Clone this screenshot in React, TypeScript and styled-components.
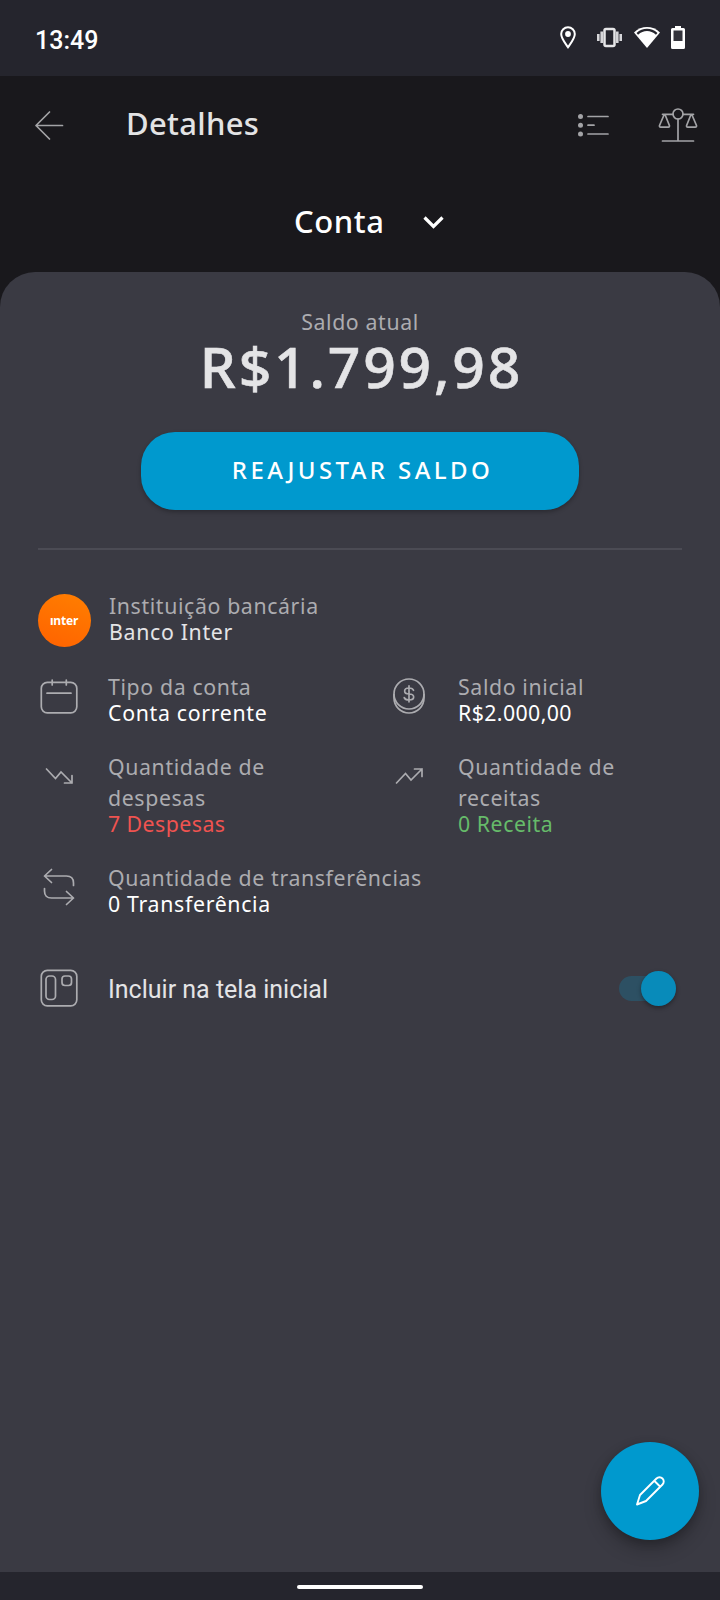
import React from "react";
import styled, { createGlobalStyle } from "styled-components";

const GlobalStyle = createGlobalStyle`
  *, *::before, *::after { box-sizing: border-box; }
  body { margin: 0; background: #19181c; font-family: "Noto Sans", sans-serif; }
  button { font: inherit; border: 0; padding: 0; background: none; color: inherit; cursor: pointer; }
  svg { display: block; flex: none; }
`;

const Screen = styled.div`
  position: relative;
  display: flex;
  flex-direction: column;
  width: 720px;
  height: 1600px;
  overflow: hidden;
  background: #19181c;
`;

const StatusBar = styled.header`
  display: flex;
  align-items: center;
  justify-content: space-between;
  flex: none;
  height: 76px;
  padding: 2px 32px 0 35px;
  background: #25252d;
`;

const Clock = styled.span`
  padding-top: 3px;
  font: 500 25px/30px Roboto, sans-serif;
  color: #fff;
`;

const StatusIcons = styled.div`
  display: flex;
  height: 26px;
  margin-top: -5px;
`;

const Toolbar = styled.div`
  display: flex;
  align-items: center;
  flex: none;
  height: 98px;
  padding: 0 21px 0 32px;
  color: #a3a3a6;
`;

const IconButton = styled.button<{ $gap?: number }>`
  display: flex;
  margin-left: ${({ $gap = 0 }) => $gap}px;
`;

const Title = styled.h1`
  flex: 1;
  margin: -4px 0 0 58px;
  font-size: 31px;
  font-weight: 500;
  line-height: 44px;
  letter-spacing: 0.3px;
  color: #e3e3e4;
`;

const AccountPicker = styled.button`
  display: flex;
  align-items: center;
  align-self: flex-start;
  flex: none;
  gap: 36px;
  height: 98px;
  margin-left: 294px;
  padding-bottom: 4px;
  font-size: 31px;
  font-weight: 500;
  letter-spacing: 0.6px;
  color: #fff;
`;

const Panel = styled.main`
  display: flex;
  flex-direction: column;
  flex: 1;
  padding: 34px 38px 0;
  border-radius: 35px 35px 0 0;
  background: #3a3a43;
`;

const Summary = styled.section`
  display: flex;
  flex-direction: column;
  align-items: center;
  height: 244px;
  border-bottom: 2px solid #4b4b54;
`;

const Label = styled.span`
  font-size: 21.3px;
  line-height: 31px;
  letter-spacing: 0.62px;
  color: #acacb0;
`;

const Value = styled.span<{ $color?: string; $spacing?: number }>`
  font-size: 21.3px;
  line-height: 21px;
  letter-spacing: ${({ $spacing = 0.68 }) => $spacing}px;
  color: ${({ $color = "#fff" }) => $color};
`;

const Balance = styled.strong`
  height: 95px;
  padding-left: 3px;
  font-size: 57px;
  font-weight: 500;
  line-height: 58px;
  letter-spacing: 2.8px;
  -webkit-text-stroke: 0.6px #e4e4e6;
  color: #e4e4e6;
`;

const AdjustButton = styled.button`
  width: 438px;
  height: 78px;
  padding: 0 0 3px 5px;
  border-radius: 34px;
  background: #0099ce;
  box-shadow: 0 2px 4px rgba(0, 0, 0, 0.28);
  font-size: 24px;
  font-weight: 500;
  letter-spacing: 3.4px;
  color: #fff;
`;

const Details = styled.section`
  display: grid;
  grid-template-columns: 350px 294px;
  row-gap: 28px;
  padding-top: 40px;
`;

const Item = styled.div<{ $wide?: boolean }>`
  display: flex;
  grid-column: ${({ $wide }) => ($wide ? "1 / -1" : "auto")};
`;

const ItemIcon = styled.div<{ $top?: number; $width?: number }>`
  flex: none;
  width: ${({ $width = 70 }) => $width}px;
  max-height: 53px;
  padding-top: ${({ $top = 4 }) => $top}px;
  color: #acacb0;
`;

const ItemText = styled.div<{ $narrow?: boolean }>`
  display: flex;
  flex-direction: column;
  width: ${({ $narrow }) => ($narrow ? "190px" : "auto")};
`;

const HomeRow = styled.label`
  display: flex;
  align-items: center;
  height: 60px;
  margin-top: 44px;
  padding-right: 6px;
`;

const HomeLabel = styled.span`
  flex: 1;
  padding-top: 3px;
  font: 400 25px/32px Roboto, sans-serif;
  color: #e4e4e6;
`;

const Switch = styled.span`
  display: flex;
  align-items: center;
  justify-content: flex-end;
  width: 57px;
  height: 25px;
  border-radius: 13px;
  background: #2d5063;
`;

const Thumb = styled.span`
  width: 35px;
  height: 35px;
  border-radius: 50%;
  background: #088bba;
  box-shadow: 0 2px 4px rgba(0, 0, 0, 0.35);
`;

const NavBar = styled.footer`
  display: flex;
  justify-content: center;
  flex: none;
  height: 28px;
  padding-top: 13px;
  background: #25252d;
`;

const Handle = styled.span`
  width: 126px;
  height: 4px;
  border-radius: 2px;
  background: #fff;
`;

const EditButton = styled.button`
  position: absolute;
  right: 21px;
  bottom: 60px;
  display: flex;
  align-items: center;
  justify-content: center;
  width: 98px;
  height: 98px;
  border-radius: 50%;
  background: #0099ce;
  box-shadow: 0 10px 18px rgba(0, 0, 0, 0.22), 0 3px 8px rgba(0, 0, 0, 0.2);
  color: #fff;
`;

type DrawingProps = { w: number; h: number; stroke?: number; children: React.ReactNode };

const Drawing = ({ w, h, stroke = 1.7, children }: DrawingProps) => (
  <svg width={w} height={h} viewBox={`0 0 ${w} ${h}`} fill="none" stroke="currentColor"
    strokeWidth={stroke} strokeLinecap="round" strokeLinejoin="round">
    {children}
  </svg>
);

const StatusGlyphs = () => (
  <svg width="128" height="26" viewBox="560 24 128 26" fill="none" stroke="#fff">
    <path d="M568 47.200C565.800 43.800 561.200 38.700 561.200 34a6.800 6.800 0 0 1 13.600 0c0 4.700-4.600 9.800-6.800 13.200z" strokeWidth="2" />
    <circle cx="568" cy="34" r="2.900" fill="#fff" stroke="none" />
    <rect x="604.500" y="29" width="10" height="17" rx="1.500" stroke="#e6e6e8" strokeWidth="2.500" />
    <path d="M601.700 31.500v11.500M617.300 31.500v11.500M598.300 34v7M620.700 34v7" stroke="#d6d6d9" strokeWidth="2.600" />
    <path d="M634 32.500C641.500 25.200 652.500 25.200 660 32.500L647 48z" fill="#fff" stroke="none" />
    <path d="M637.300 33.800C643.200 28.600 650.800 28.600 656.700 33.800" stroke="#25252d" strokeWidth="2.400" />
    <path d="M671 29.500q0-1.500 1.500-1.500h2.500v-2h6v2h2.500q1.500 0 1.500 1.500v18q0 1.500-1.500 1.500h-11q-1.500 0-1.500-1.500z" fill="#fff" stroke="none" />
    <rect x="673.500" y="30.500" width="9" height="10.500" fill="#34343c" stroke="none" />
  </svg>
);

const BackIcon = () => (
  <Drawing w={36} h={36}>
    <path d="M17.500 5L4 18.500 17.500 32M4 18.500h26.500" />
  </Drawing>
);

const ListIcon = () => (
  <Drawing w={34} h={30}>
    <g fill="currentColor" stroke="none">
      <circle cx="4.500" cy="6.500" r="2.500" />
      <circle cx="4.500" cy="15.200" r="2.500" />
      <circle cx="4.500" cy="24" r="2.500" />
    </g>
    <path d="M12 6.500h20M12 15.200h6M12 24h20" />
  </Drawing>
);

const ScaleIcon = () => (
  <Drawing w={42} h={38}>
    <circle cx="21" cy="8" r="5" />
    <path d="M16 8.300H5.500M26 8.300H36.500M21 13v22M5.500 35h31" />
    <path d="M7 9L2.500 19.500q-.3 1.700 1.200 1.700h7.600q1.400 0 1.100-1.700L8.200 9M33.800 9l-4.200 10.500q-.3 1.700 1.100 1.700h7.600q1.400 0 1.200-1.700L35 9" />
  </Drawing>
);

const ChevronIcon = () => (
  <Drawing w={24} h={20} stroke={3.2}>
    <path d="M3.500 6.500l9 9 9-9" strokeLinecap="butt" strokeLinejoin="miter" />
  </Drawing>
);

const CalendarIcon = () => (
  <Drawing w={42} h={40}>
    <rect x="3.300" y="7.300" width="35.500" height="30.500" rx="6" />
    <path d="M14.200 5v5M28.300 5v5M9 18.200h24" />
  </Drawing>
);

const CoinIcon = () => (
  <Drawing w={42} h={42}>
    <circle cx="21" cy="19" r="15" />
    <path d="M6 19.500v3.500a15 15 0 0 0 30 0v-3.500" />
    <path d="M25.500 15.300c-.5-1.600-2-2.300-4.500-2.300-5.800 0-5.800 6 0 6 6.200 0 6.200 6 0 6-2.600 0-4.200-.7-4.800-2.400M21 10.800v16" />
  </Drawing>
);

const TrendDownIcon = () => (
  <Drawing w={42} h={30}>
    <path d="M8.500 8l9 9.500 5.500-6.500 11 11M26.500 22H34v-7.500" strokeLinejoin="miter" />
  </Drawing>
);

const TrendUpIcon = () => (
  <Drawing w={42} h={30}>
    <path d="M8.500 22l9-9.500 5.500 6.500 11-11M26.500 8H34v7.500" strokeLinejoin="miter" />
  </Drawing>
);

const TransferIcon = () => (
  <Drawing w={42} h={42}>
    <path d="M13.500 3.500L6.500 10l7 6.500M6.500 10h22q7 0 7 7v2.500M28.500 25.500l7 6.500-7 6.500M35.500 32h-22q-7 0-7-7v-2.500" />
  </Drawing>
);

const BoardIcon = () => (
  <Drawing w={42} h={42}>
    <rect x="3.300" y="3.300" width="35.500" height="35.500" rx="6" />
    <rect x="8" y="9" width="9.500" height="23.500" rx="3.500" />
    <rect x="24" y="9" width="9.500" height="9.500" rx="3" />
  </Drawing>
);

const PencilIcon = () => (
  <Drawing w={34} h={34} stroke={1.9}>
    <path d="M4 30.500l3-9.500L23.500 4.500a4.200 4.200 0 0 1 6 6L13 27l-9 3.500zM21.500 7l5.500 5.500" />
  </Drawing>
);

const BankBadge = styled.div`
  display: flex;
  align-items: center;
  justify-content: center;
  width: 53px;
  height: 53px;
  border-radius: 50%;
  background: linear-gradient(20deg, #ff6200, #ff7f00);
  padding-right: 1px;
  font: 700 12px/14px "Noto Sans", sans-serif;
  letter-spacing: -0.2px;
  color: #fff;
`;

type DetailProps = {
  icon: React.ReactNode;
  label: string;
  value: string;
  color?: string;
  spacing?: number;
  wide?: boolean;
  narrow?: boolean;
  top?: number;
  iconWidth?: number;
};

const Detail = ({ icon, label, value, color, spacing, wide, narrow, top, iconWidth }: DetailProps) => (
  <Item $wide={wide}>
    <ItemIcon $top={top} $width={iconWidth}>{icon}</ItemIcon>
    <ItemText $narrow={narrow}>
      <Label>{label}</Label>
      <Value $color={color} $spacing={spacing}>{value}</Value>
    </ItemText>
  </Item>
);

export default function App() {
  return (
    <Screen>
      <GlobalStyle />
      <StatusBar>
        <Clock>13:49</Clock>
        <StatusIcons><StatusGlyphs /></StatusIcons>
      </StatusBar>
      <Toolbar>
        <IconButton aria-label="Voltar"><BackIcon /></IconButton>
        <Title>Detalhes</Title>
        <IconButton aria-label="Lista"><ListIcon /></IconButton>
        <IconButton $gap={47} aria-label="Comparar"><ScaleIcon /></IconButton>
      </Toolbar>
      <AccountPicker>Conta <ChevronIcon /></AccountPicker>
      <Panel>
        <Summary>
          <Label>Saldo atual</Label>
          <Balance>R$1.799,98</Balance>
          <AdjustButton>REAJUSTAR SALDO</AdjustButton>
        </Summary>
        <Details>
          <Detail wide iconWidth={71} icon={<BankBadge>ınter</BankBadge>} label="Instituição bancária" value="Banco Inter" color="#e4e4e6" />
          <Detail icon={<CalendarIcon />} label="Tipo da conta" value="Conta corrente" />
          <Detail icon={<CoinIcon />} label="Saldo inicial" value="R$2.000,00" spacing={0.4} />
          <Detail narrow top={10} icon={<TrendDownIcon />} label="Quantidade de despesas" value="7 Despesas" color="#ef5350" spacing={0.45} />
          <Detail narrow top={10} icon={<TrendUpIcon />} label="Quantidade de receitas" value="0 Receita" color="#66bb6a" spacing={0.55} />
          <Detail wide icon={<TransferIcon />} label="Quantidade de transferências" value="0 Transferência" />
        </Details>
        <HomeRow>
          <ItemIcon $top={0}><BoardIcon /></ItemIcon>
          <HomeLabel>Incluir na tela inicial</HomeLabel>
          <Switch role="switch" aria-checked="true"><Thumb /></Switch>
        </HomeRow>
      </Panel>
      <NavBar><Handle /></NavBar>
      <EditButton aria-label="Editar"><PencilIcon /></EditButton>
    </Screen>
  );
}
